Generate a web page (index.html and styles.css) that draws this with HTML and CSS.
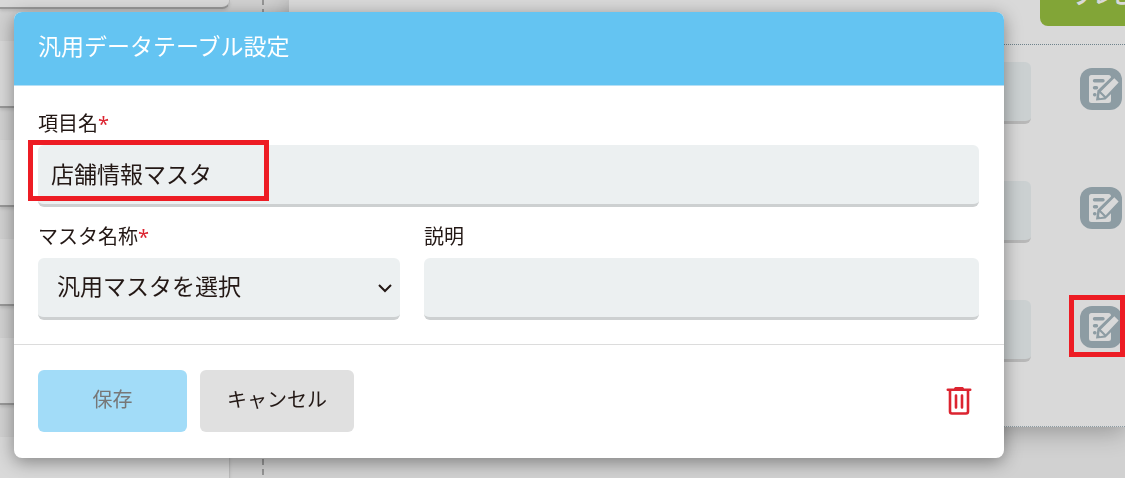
FILE: index.html
```html
<!DOCTYPE html>
<html lang="ja">
<head>
<meta charset="utf-8">
<title>汎用データテーブル設定</title>
<link rel="stylesheet" href="styles.css">
</head>
<body>
<svg class="sprite" aria-hidden="true">
  <symbol id="icon-edit" viewBox="0 0 42 42">
    <path fill="#d9d9d9" d="M11.500 7h17a2.500 2.500 0 0 1 2.500 2.500v23a2.500 2.500 0 0 1-2.500 2.500h-17A2.500 2.500 0 0 1 9 32.500v-23A2.500 2.500 0 0 1 11.500 7z"/>
    <path stroke="#8d9ca3" stroke-width="3.400" stroke-linecap="round" d="M14.500 12.700h8.500M14.500 19.700h2M14.600 26.700h.3"/>
    <path fill="#8d9ca3" d="M33 7.500 17.500 22.500 16 32.500 25.500 31.500 41 16.500z"/>
    <path fill="#d9d9d9" d="M34.300 10.300 38.600 14.600 25.700 28.200 20.900 23.400zM19.600 25.200l4.400 4.300-4 .8-1-1z"/>
  </symbol>
</svg>

<div class="page">
  <aside class="sidebar">
    <div class="card"></div>
    <div class="card"></div>
    <div class="card"></div>
    <div class="card"></div>
    <div class="card"></div>
    <div class="card"></div>
  </aside>
  <div class="divider"></div>
  <main class="panel">
    <div class="toolbar"><button class="preview" type="button">プレビュー</button></div>
    <div class="rows">
      <div class="row"><input class="ghost" aria-label="項目1"><button class="edit" type="button" aria-label="編集"><svg><use href="#icon-edit"/></svg></button></div>
      <div class="row"><input class="ghost" aria-label="項目2"><button class="edit" type="button" aria-label="編集"><svg><use href="#icon-edit"/></svg></button></div>
      <div class="row"><input class="ghost" aria-label="項目3"><button class="edit marked" type="button" aria-label="編集"><svg><use href="#icon-edit"/></svg></button></div>
    </div>
  </main>
</div>

<div class="overlay">
  <form class="dialog" role="dialog" aria-labelledby="title">
    <h1 class="title" id="title">汎用データテーブル設定</h1>
    <div class="fields">
      <div class="field wide">
        <label for="name">項目名<span class="required">*</span></label>
        <div class="control marked-field"><input id="name" type="text" value="店舗情報マスタ"></div>
      </div>
      <div class="field">
        <label for="master">マスタ名称<span class="required">*</span></label>
        <div class="control">
          <select id="master"><option>汎用マスタを選択</option></select>
          <svg class="chevron" viewBox="0 0 16 10" aria-hidden="true"><path d="m2 2 6 6 6-6"/></svg>
        </div>
      </div>
      <div class="field">
        <label for="note">説明</label>
        <div class="control"><input id="note" type="text"></div>
      </div>
    </div>
    <div class="actions">
      <button class="save" type="button" disabled>保存</button>
      <button class="cancel" type="button">キャンセル</button>
      <button class="delete" type="button" aria-label="削除">
        <svg viewBox="0 0 26 30"><path fill="#dc2430" d="M8 3c0-1.500 1-2 2-2h6c1 0 2 .500 2 2z"/><path fill="none" stroke="#dc2430" stroke-width="2.600" stroke-linecap="round" stroke-linejoin="round" d="M1.800 3.800h22.400M4 4v21.500a2 2 0 0 0 2 2h14a2 2 0 0 0 2-2V4M10 9.500v12M16 9.500v12"/></svg>
      </button>
    </div>
  </form>
</div>
</body>
</html>
```
FILE: styles.css
```css
*, *::before, *::after { box-sizing: border-box; }

body {
  margin: 0;
  background: #d1d1d1;
  color: #231815;
  font-family: "Noto Sans CJK JP", sans-serif;
  font-weight: 400;
  overflow: hidden;
}

button, input, select {
  font: inherit;
  color: inherit;
  border: 0;
  margin: 0;
  padding: 0;
}

.sprite { position: absolute; width: 0; height: 0; }

.page {
  display: flex;
  height: 100vh;
  overflow: hidden;
}

.sidebar {
  flex: 0 0 230px;
  display: flex;
  flex-direction: column;
  gap: 32px;
}

.card {
  flex: 0 0 67px;
  background: #d9d9d9;
  border-right: 1px solid #bcbcbc;
  border-bottom: 2px solid #999;
  border-radius: 0 0 8px 0;
  box-shadow: 0 2px 3px #bbb;
}

.card:first-child { flex-basis: 9px; }

.divider {
  flex: 0 0 59px;
  background: repeating-linear-gradient(#969696 0 5px, transparent 5px 9px, #969696 9px 10px) 32px 0 / 2px 100% no-repeat;
}

.panel {
  flex: 1;
  align-self: flex-start;
  min-width: 0;
  background: #d9d9d9;
  border-bottom: 1px dotted #8d9ca3;
  box-shadow: 0 4px 24px rgba(0, 0, 0, .3);
}

.toolbar {
  display: flex;
  justify-content: flex-end;
  align-items: flex-end;
  height: 45px;
  padding-bottom: 18px;
  border-bottom: 1px dotted #6f838c;
}

.preview {
  flex: none;
  width: 85px;
  height: 62px;
  padding-left: 33px;
  background: #82a537;
  color: #d9d9d9;
  border-radius: 8px 0 0 8px;
  font-size: 20px;
  font-weight: 700;
  text-align: left;
  white-space: nowrap;
}

.rows {
  display: grid;
  gap: 57px;
  padding: 17px 3px 64px 40px;
}

.row {
  display: flex;
  align-items: center;
  gap: 49px;
}

.ghost {
  flex: 1;
  min-width: 0;
  height: 62px;
  background: #cbd0d1;
  border-bottom: 3px solid #b8b8b8;
  border-radius: 6px;
}

.edit {
  position: relative;
  display: flex;
  flex: 0 0 42px;
  height: 42px;
  margin-bottom: 8px;
  background: #8d9ca3;
  border-radius: 12px;
}

.edit svg { width: 42px; height: 42px; fill: none; }

.edit.marked::after {
  content: "";
  position: absolute;
  inset: -11px -3px -9px -11px;
  border: 5px solid #ed1c24;
}

.overlay {
  position: fixed;
  inset: 0;
  padding: 12px 121px 0 14px;
}

.dialog {
  background: #fff;
  border-radius: 8px;
  box-shadow: 0 4px 18px rgba(0, 0, 0, .4);
}

.title {
  margin: 0;
  padding: 16px 24px 23px;
  background: #64c4f2;
  border-bottom: 1px solid #b5dff5;
  border-radius: 8px 8px 0 0;
  color: #fff;
  font-size: 23px;
  font-weight: 400;
  line-height: 34px;
}

.fields {
  display: grid;
  grid-template-columns: 362fr 555fr;
  gap: 17px 24px;
  padding: 25px 25px 24px 24px;
  border-bottom: 1px solid #dcdcdc;
}

.wide { grid-column: 1 / -1; }

.field label {
  display: block;
  margin-bottom: 10px;
  font-size: 20px;
  line-height: 24px;
}

.required {
  color: #dc2430;
  font-family: "Noto Sans", sans-serif;
  line-height: 1;
}

.control { position: relative; }

.control input,
.control select {
  display: block;
  width: 100%;
  height: 62px;
  padding: 0 13px 3px;
  background: #ecf0f1;
  border-bottom: 3px solid #cdd0d1;
  border-radius: 6px;
  font-size: 23px;
  appearance: none;
}

.control select { padding: 0 19px 5px; }

.chevron {
  position: absolute;
  top: 25px;
  right: 7px;
  width: 16px;
  height: 10px;
  fill: none;
  stroke: #231815;
  stroke-width: 2;
}

.marked-field::after {
  content: "";
  position: absolute;
  top: -5px;
  left: -10px;
  width: 241px;
  height: 61px;
  border: 5px solid #ed1c24;
  pointer-events: none;
}

.actions {
  display: flex;
  align-items: center;
  gap: 13px;
  padding: 25px 32px 26px 24px;
}

.save, .cancel {
  height: 62px;
  padding-bottom: 6px;
  border-radius: 6px;
  font-size: 20px;
}

.save { width: 149px; background: #a2dcf8; color: #777; }
.cancel { width: 154px; background: #e0e0e0; }

.delete {
  display: flex;
  margin-left: auto;
  background: none;
}

.delete svg { width: 26px; height: 30px; }
```
